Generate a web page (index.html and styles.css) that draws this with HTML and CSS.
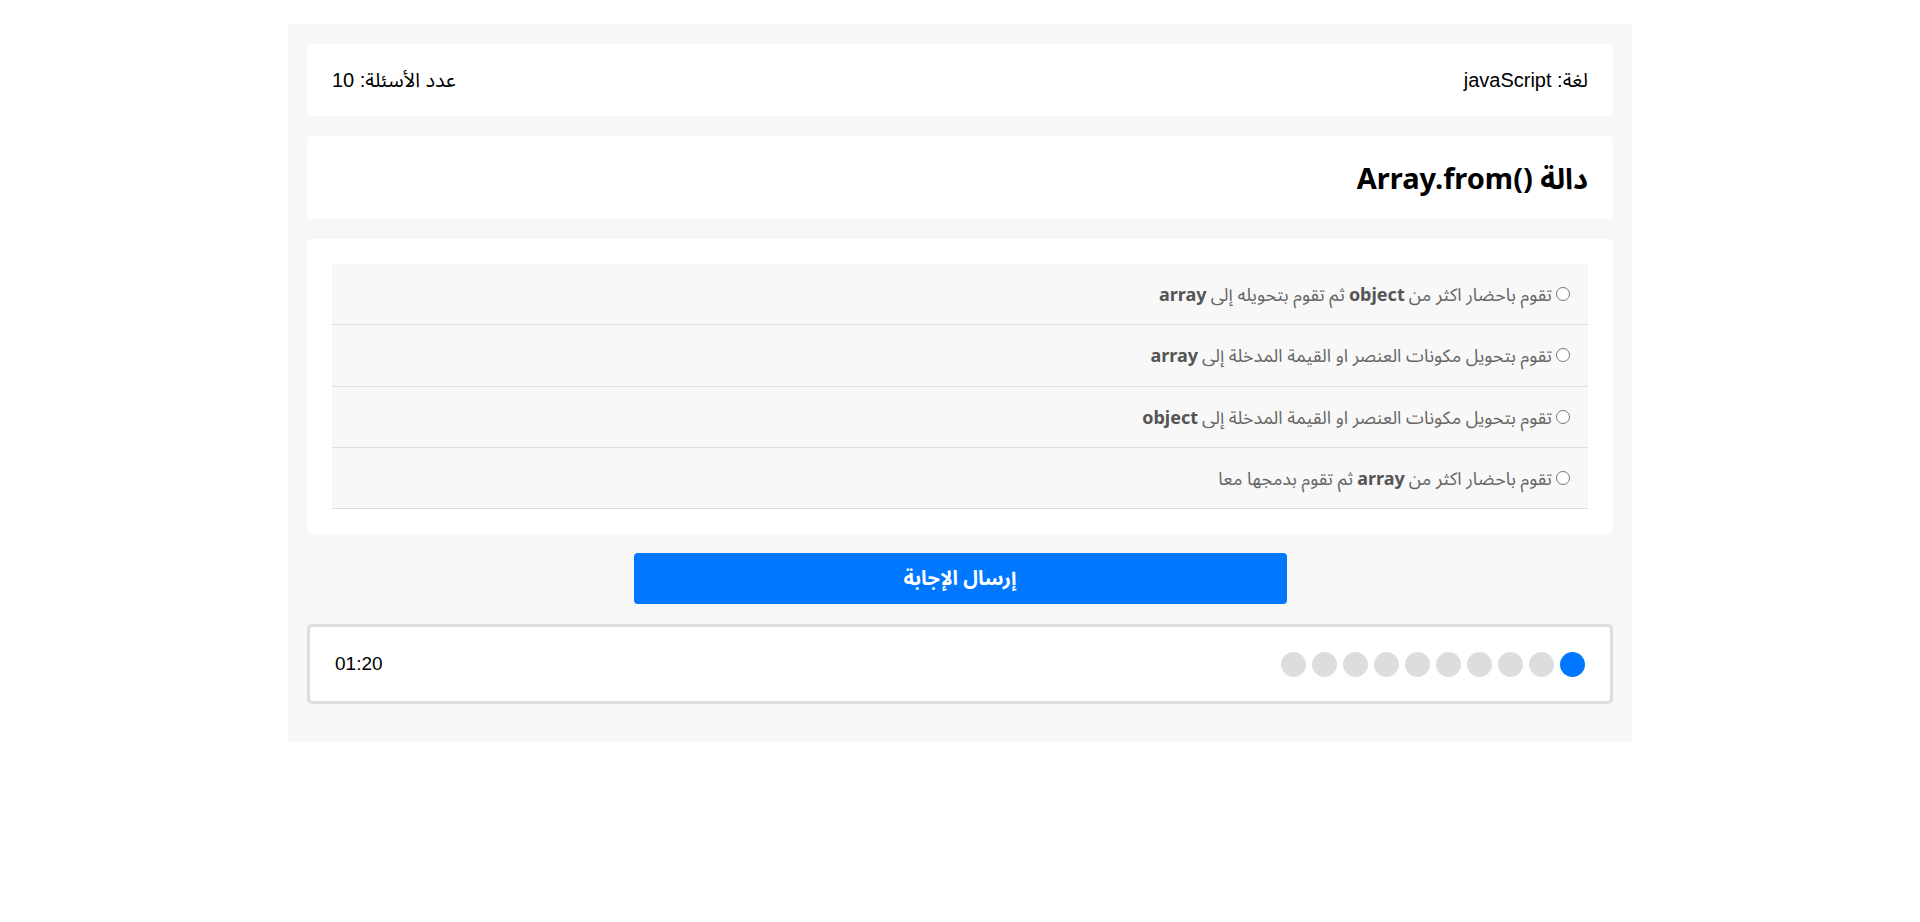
FILE: index.html
```html
<!DOCTYPE html>
<html lang="ar" dir="rtl">
<head>
<meta charset="utf-8">
<title>اختبار</title>
<link rel="stylesheet" href="styles.css">
</head>
<body>
<div class="quiz">
  <div class="card info">
    <span class="info-item">لغة: javaScript</span>
    <span class="info-item">عدد الأسئلة: 10</span>
  </div>
  <div class="card title-card">
    <h2 class="title">دالة <bdi>Array.from()</bdi></h2>
  </div>
  <div class="card answers-card">
    <ul class="answers">
      <li class="answer"><label><input type="radio" name="a"> تقوم باحضار اكثر من <b>object</b> ثم تقوم بتحويله إلى <b>array</b></label></li>
      <li class="answer"><label><input type="radio" name="a"> تقوم بتحويل مكونات العنصر او القيمة المدخلة إلى <b>array</b></label></li>
      <li class="answer"><label><input type="radio" name="a"> تقوم بتحويل مكونات العنصر او القيمة المدخلة إلى <b>object</b></label></li>
      <li class="answer"><label><input type="radio" name="a"> تقوم باحضار اكثر من <b>array</b> ثم تقوم بدمجها معا</label></li>
    </ul>
  </div>
  <button class="submit">إرسال الإجابة</button>
  <div class="bottom">
    <div class="bullets">
      <span class="dot on"></span>
      <span class="dot"></span>
      <span class="dot"></span>
      <span class="dot"></span>
      <span class="dot"></span>
      <span class="dot"></span>
      <span class="dot"></span>
      <span class="dot"></span>
      <span class="dot"></span>
      <span class="dot"></span>
    </div>
    <div class="countdown">01:20</div>
  </div>
</div>
</body>
</html>
```
FILE: styles.css
```css
* { box-sizing: border-box; }
html, body { margin: 0; padding: 0; background: #fff; }
body {
  font-family: "Noto Sans", "Noto Sans Arabic", "DejaVu Sans", sans-serif;
  color: #000;
}
.quiz {
  width: 70%;
  margin: 24px auto 0;
  padding: 20px 19px 38px;
  background: #f7f7f7;
  display: flex;
  flex-direction: column;
}
.card {
  background: #fff;
  border-radius: 5px;
  padding: 25px;
}
.info {
  display: flex;
  justify-content: space-between;
  align-items: center;
  font-family: "Liberation Sans", "Noto Sans Arabic", "DejaVu Sans", sans-serif;
  font-size: 20px;
  line-height: 22px;
}
.title-card { margin-top: 20px; padding: 25px; }
.title {
  margin: 0;
  font-size: 29px;
  line-height: 33px;
  font-weight: bold;
}
.answers-card { margin-top: 20px; }
.answers {
  list-style: none;
  margin: 0;
  padding: 0;
  background: #f8f8f8;
}
.answer {
  padding: 20px 18px;
  line-height: 20.25px;
  border-bottom: 1px solid #dedede;
  font-size: 18px;
  color: #666;
}
.answer b { color: #555; }
.answer label { display: flex; align-items: center; gap: 4px; }
.answer input {
  margin: 0;
  width: 14px;
  height: 14px;
}
.submit {
  align-self: center;
  width: 50%;
  height: 51px;
  margin-top: 19px;
  border: none;
  border-radius: 4px;
  background: #0077ff;
  color: #fff;
  font-family: "Noto Sans", "Noto Sans Arabic", "DejaVu Sans", sans-serif;
  font-size: 20px;
  font-weight: bold;
}
.bottom {
  margin-top: 20px;
  background: #fff;
  border: 3px solid #dddddd;
  border-radius: 5px;
  padding: 24.5px 25px;
  display: flex;
  justify-content: space-between;
  align-items: center;
}
.bullets { display: flex; gap: 6px; }
.dot {
  width: 25px;
  height: 25px;
  border-radius: 50%;
  background: #dddddd;
}
.dot.on { background: #0077ff; }
.countdown {
  font-family: "Liberation Sans", sans-serif;
  font-size: 19px;
  line-height: 22px;
}
```
